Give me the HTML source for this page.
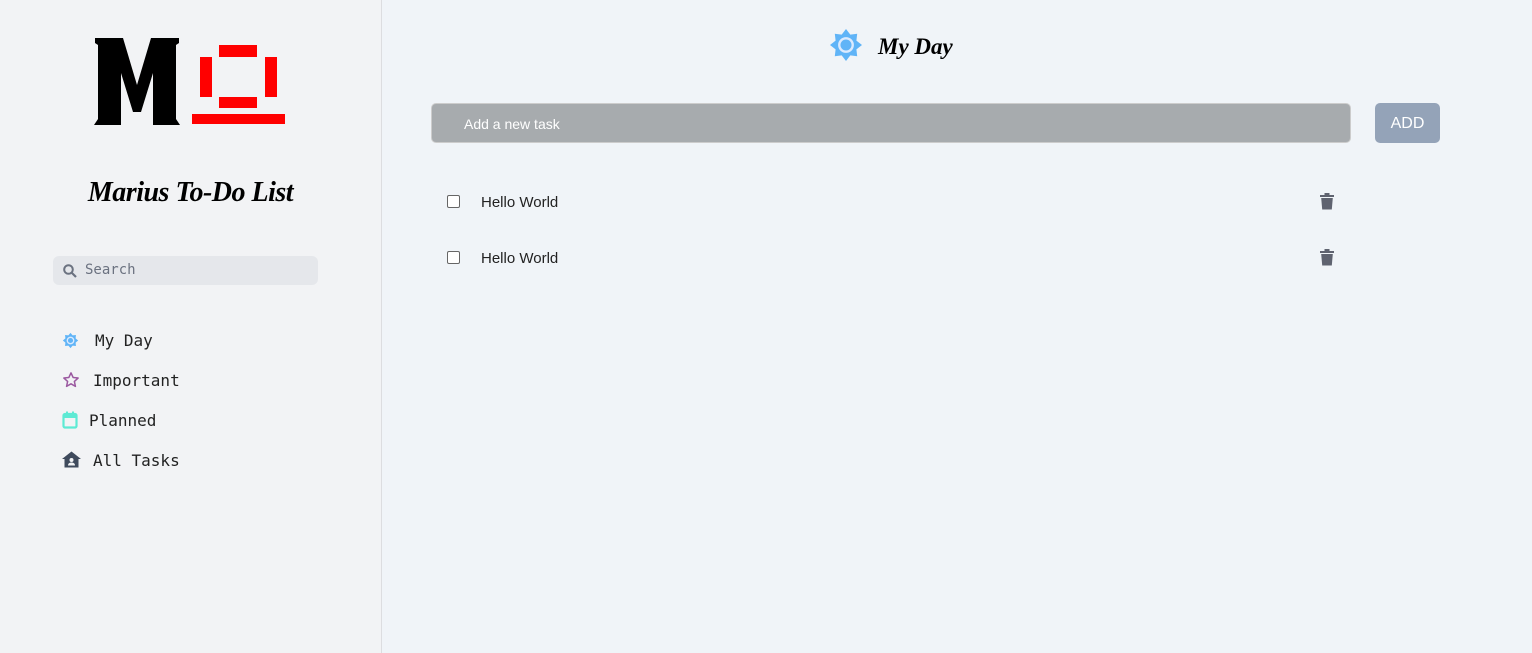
<!DOCTYPE html>
<html><head><meta charset="utf-8"><style>
*{margin:0;padding:0;box-sizing:border-box}
body{width:1532px;height:653px;overflow:hidden;background:#f0f4f8;font-family:"Liberation Sans",sans-serif;position:relative}
.side{position:absolute;left:0;top:0;width:382px;height:653px;background:#f2f3f5;border-right:1px solid #dcdde0}
.abs{position:absolute}
.r{position:absolute;background:#ff0000}
.title{position:absolute;left:0;width:381px;text-align:center;top:177px;font-family:"Liberation Serif",serif;font-style:italic;font-weight:bold;font-size:28px;color:#000;letter-spacing:-0.5px}
.search{position:absolute;left:53px;top:256px;width:265px;height:29px;background:#e5e7eb;border-radius:6px}
.search span{position:absolute;left:32px;top:6px;font-family:"DejaVu Sans Mono","Liberation Mono",monospace;font-size:14px;color:#6b7280}
.nav{position:absolute;font-family:"DejaVu Sans Mono","Liberation Mono",monospace;font-size:16px;color:#222}
.input{position:absolute;left:431px;top:103px;width:920px;height:40px;background:#a7abae;border:1px solid #ccc;border-radius:5px}
.input span{position:absolute;left:32px;top:12px;color:#fff;font-size:14px}
.add{position:absolute;left:1375px;top:103px;width:65px;height:40px;background:#94a3b8;border-radius:5px;color:#fff;font-size:16px;text-align:center;line-height:42px}
.cb{position:absolute;left:447px;width:13px;height:13px;border:1px solid #666;border-radius:2px;background:#fff}
.task{position:absolute;left:481px;font-size:15px;color:#222}
</style></head><body>
<div class="side">
  <svg class="abs" style="left:93px;top:37px" width="88" height="90" viewBox="0 0 88 90"><path d="M2 1H30L44 48L58 1H86V6L83 8V82L87 88H60V36L48 75H40L28 36V88H1L5 82V8L2 6Z" fill="#000"/></svg>
  <div class="r" style="left:219px;top:45px;width:38px;height:12px"></div>
  <div class="r" style="left:200px;top:57px;width:12px;height:40px"></div>
  <div class="r" style="left:265px;top:57px;width:12px;height:40px"></div>
  <div class="r" style="left:219px;top:97px;width:38px;height:11px"></div>
  <div class="r" style="left:192px;top:114px;width:93px;height:10px"></div>
  <div class="title">Marius To-Do List</div>
  <div class="search">
    <svg class="abs" style="left:10px;top:8px" width="14" height="14" viewBox="0 0 14 14"><circle cx="5.5" cy="5.5" r="4.3" fill="none" stroke="#6b7280" stroke-width="2"/><path d="M8.6 8.6L13 13" stroke="#6b7280" stroke-width="2.2"/></svg>
    <span>Search</span>
  </div>
  <svg class="abs" style="left:62px;top:332px" width="17" height="17" viewBox="-10 -10 20 20"><polygon fill="#60b4f7" points="0,-9 2.5,-6 6.4,-6.4 6,-2.5 9,0 6,2.5 6.4,6.4 2.5,6 0,9 -2.5,6 -6.4,6.4 -6,2.5 -9,0 -6,-2.5 -6.4,-6.4 -2.5,-6"/><circle r="3.8" fill="none" stroke="#dbeafe" stroke-width="1.6"/></svg>
  <div class="nav" style="left:95px;top:331px">My Day</div>
  <svg class="abs" style="left:62px;top:371px" width="18" height="18" viewBox="0 0 24 24"><path d="M12 2.5l2.9 6.2 6.6.7-5 4.5 1.4 6.6L12 17.1l-5.9 3.4 1.4-6.6-5-4.5 6.6-.7z" fill="none" stroke="#9b59a0" stroke-width="2" stroke-linejoin="round"/></svg>
  <div class="nav" style="left:93px;top:371px">Important</div>
  <svg class="abs" style="left:62px;top:411px" width="16" height="18" viewBox="0 0 16 18"><rect x="1.5" y="3" width="13" height="13.5" rx="1.5" fill="none" stroke="#5eead4" stroke-width="2.2"/><rect x="1.5" y="3" width="13" height="4" fill="#5eead4"/><rect x="4" y="0.5" width="2" height="3" fill="#5eead4"/><rect x="10" y="0.5" width="2" height="3" fill="#5eead4"/></svg>
  <div class="nav" style="left:89px;top:411px">Planned</div>
  <svg class="abs" style="left:62px;top:451px" width="19" height="17" viewBox="0 0 19 17"><path d="M9.5 0.5L19 8h-2.5v8.5h-14V8H0z" fill="#3f4a5c"/><circle cx="9.5" cy="9" r="2" fill="#f2f3f5"/><path d="M6 14.5c0-2 1.5-3 3.5-3s3.5 1 3.5 3z" fill="#f2f3f5"/></svg>
  <div class="nav" style="left:93px;top:451px">All Tasks</div>
</div>
<svg class="abs" style="left:830px;top:29px" width="32" height="32" viewBox="-10 -10 20 20"><polygon fill="#60b4f7" points="0,-10 2.7,-6.5 7,-7 6.5,-2.7 10,0 6.5,2.7 7,7 2.7,6.5 0,10 -2.7,6.5 -7,7 -6.5,2.7 -10,0 -6.5,-2.7 -7,-7 -2.7,-6.5"/><circle r="4.2" fill="none" stroke="#dbeafe" stroke-width="1.5"/></svg>
<div class="abs" style="left:878px;top:34px;font-family:'Liberation Serif',serif;font-style:italic;font-weight:bold;font-size:23px;color:#000">My Day</div>
<div class="input"><span>Add a new task</span></div>
<div class="add">ADD</div>
<div class="cb" style="top:195px"></div>
<div class="task" style="top:194px">Hello World</div>
<div class="cb" style="top:251px"></div>
<div class="task" style="top:250px">Hello World</div>
<svg class="abs" style="left:1320px;top:193px" width="14" height="17" viewBox="0 0 14 17"><rect x="0" y="2" width="14" height="2" fill="#5f6370"/><rect x="4.5" y="0" width="5" height="2.5" fill="#5f6370"/><path d="M1.2 5h11.6l-1 11.5H2.2z" fill="#5f6370"/></svg>
<svg class="abs" style="left:1320px;top:249px" width="14" height="17" viewBox="0 0 14 17"><rect x="0" y="2" width="14" height="2" fill="#5f6370"/><rect x="4.5" y="0" width="5" height="2.5" fill="#5f6370"/><path d="M1.2 5h11.6l-1 11.5H2.2z" fill="#5f6370"/></svg>
</body></html>
